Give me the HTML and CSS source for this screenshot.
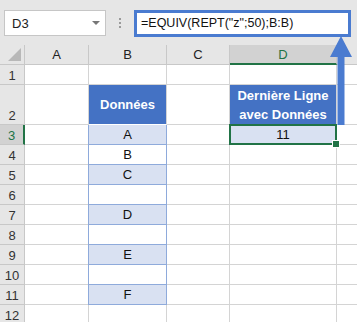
FILE: index.html
```html
<!DOCTYPE html>
<html lang="fr">
<head>
    <meta name="viewport" content="width=device-width, initial-scale=1.0" />
    <title>EQUIV REPT</title>
    <link rel="stylesheet" href="styles.css">
</head>
<body>
    <div class="toolbar">
        <div class="name-box">
            <span>D3</span>
            <span class="drop"></span>
        </div>
        <div class="dots"><i></i><i></i><i></i></div>
        <div class="formula">=EQUIV(REPT("z";50);B:B)</div>
    </div>

    <div class="sheet">
        <!-- en-têtes de colonnes -->
        <div class="corner"><span class="tri"></span></div>
        <div class="col-head">A</div>
        <div class="col-head">B</div>
        <div class="col-head">C</div>
        <div class="col-head active">D</div>
        <div class="col-head last"></div>

        <!-- ligne 1 -->
        <div class="row-head">1</div>
        <div class="cell"></div><div class="cell"></div><div class="cell"></div><div class="cell"></div><div class="cell last"></div>

        <!-- ligne 2 -->
        <div class="row-head tall">2</div>
        <div class="cell"></div>
        <div class="cell title">Données</div>
        <div class="cell"></div>
        <div class="cell title">Dernière Ligne<br>avec Données</div>
        <div class="cell last"></div>

        <!-- ligne 3 -->
        <div class="row-head active">3</div>
        <div class="cell"></div>
        <div class="cell data band">A</div>
        <div class="cell"></div>
        <div class="cell result">11<span class="handle"></span></div>
        <div class="cell last"></div>

        <div class="row-head">4</div>
        <div class="cell"></div><div class="cell data">B</div><div class="cell"></div><div class="cell"></div><div class="cell last"></div>

        <div class="row-head">5</div>
        <div class="cell"></div><div class="cell data band">C</div><div class="cell"></div><div class="cell"></div><div class="cell last"></div>

        <div class="row-head">6</div>
        <div class="cell"></div><div class="cell data"></div><div class="cell"></div><div class="cell"></div><div class="cell last"></div>

        <div class="row-head">7</div>
        <div class="cell"></div><div class="cell data band">D</div><div class="cell"></div><div class="cell"></div><div class="cell last"></div>

        <div class="row-head">8</div>
        <div class="cell"></div><div class="cell data"></div><div class="cell"></div><div class="cell"></div><div class="cell last"></div>

        <div class="row-head">9</div>
        <div class="cell"></div><div class="cell data band">E</div><div class="cell"></div><div class="cell"></div><div class="cell last"></div>

        <div class="row-head">10</div>
        <div class="cell"></div><div class="cell data"></div><div class="cell"></div><div class="cell"></div><div class="cell last"></div>

        <div class="row-head">11</div>
        <div class="cell"></div><div class="cell data band">F</div><div class="cell"></div><div class="cell"></div><div class="cell last"></div>

        <div class="row-head">12</div>
        <div class="cell"></div><div class="cell"></div><div class="cell"></div><div class="cell"></div><div class="cell last"></div>
    </div>

    <!-- flèche vers la barre de formule -->
    <svg class="arrow" width="24" height="92" viewBox="0 0 24 92">
        <path d="M12 0 L23 21 L15.5 21 L15.5 89 L8.5 89 L8.5 21 L1 21 Z" fill="#4a7bd0"/>
    </svg>
</body>
</html>
```

FILE: styles.css
```css
body {
    margin: 0;
    width: 357px;
    height: 322px;
    overflow: hidden;
    background: #fff;
    font-family: "Liberation Sans", Arial, sans-serif;
    color: #222;
    position: relative;
}

/* barre du haut */
.toolbar {
    height: 45px;
    background: #e6e6e6;
    display: flex;
    align-items: flex-start;
    padding-top: 10px;
    box-sizing: border-box;
}
.name-box {
    margin-left: 4px;
    width: 102px;
    height: 26px;
    box-sizing: border-box;
    background: #fff;
    border: 1px solid #c6c6c6;
    display: flex;
    align-items: center;
    justify-content: space-between;
    padding: 0 5px 0 7px;
    font-size: 13px;
    color: #222;
}
.drop {
    width: 0;
    height: 0;
    border-left: 4px solid transparent;
    border-right: 4px solid transparent;
    border-top: 4px solid #777;
}
.dots {
    width: 28px;
    height: 26px;
    display: flex;
    flex-direction: column;
    align-items: center;
    justify-content: center;
    gap: 2px;
}
.dots i {
    width: 2px;
    height: 2px;
    background: #9a9a9a;
}
.formula {
    width: 217px;
    height: 27px;
    box-sizing: border-box;
    background: #fff;
    border: 3px solid #4a7bd0;
    padding: 0 0 0 4px;
    font-size: 12.5px;
    line-height: 21px;
    color: #111;
    white-space: nowrap;
}

/* grille */
.sheet {
    display: grid;
    grid-template-columns: 25px 64px 78px 63px 107px 20px;
    grid-template-rows: 20px 20px 40px repeat(10, 20px);
}
.corner,
.col-head {
    background: #e6e6e6;
    border-right: 1px solid #c8c8c8;
    border-bottom: 1px solid #c8c8c8;
    box-sizing: border-box;
    font-size: 13px;
    text-align: center;
    line-height: 19px;
    color: #222;
}
.corner {
    position: relative;
}
.tri {
    position: absolute;
    right: 3px;
    bottom: 3px;
    width: 0;
    height: 0;
    border-left: 13px solid transparent;
    border-bottom: 13px solid #b8b8b8;
}
.col-head.active {
    background: #d2d2d2;
    border-bottom: 2px solid #217346;
    color: #217346;
}
.col-head.last {
    border-right: none;
}
.row-head {
    background: #e6e6e6;
    border-right: 1px solid #c8c8c8;
    border-bottom: 1px solid #c8c8c8;
    box-sizing: border-box;
    font-size: 13px;
    text-align: center;
    display: flex;
    align-items: flex-end;
    justify-content: center;
    padding-bottom: 1px;
    color: #333;
}
.row-head.active {
    background: #d2d2d2;
    border-right: 2px solid #217346;
    color: #217346;
}
.cell {
    border-right: 1px solid #d4d4d4;
    border-bottom: 1px solid #d4d4d4;
    box-sizing: border-box;
    font-size: 13px;
    text-align: center;
    line-height: 19px;
}
.cell.last {
    border-right: none;
}
.cell.title {
    background: #4472c4;
    color: #fff;
    font-weight: bold;
    display: flex;
    align-items: center;
    justify-content: center;
    line-height: 19px;
    border-color: #fff;
    border-right-color: #d4d4d4;
}
.cell.data {
    border: 1px solid #8eaadb;
    border-top: none;
    margin-left: -1px;
    color: #111;
}
.cell.band {
    background: #d9e1f2;
}
.cell.result {
    background: #d9e1f2;
    border: 2px solid #217346;
    margin: -1px 0 0 -1px;
    line-height: 18px;
    position: relative;
    color: #111;
}
.handle {
    position: absolute;
    right: -5px;
    bottom: -5px;
    width: 6px;
    height: 6px;
    background: #217346;
    border: 1px solid #fff;
}

.arrow {
    position: absolute;
    left: 329px;
    top: 36px;
}
```
